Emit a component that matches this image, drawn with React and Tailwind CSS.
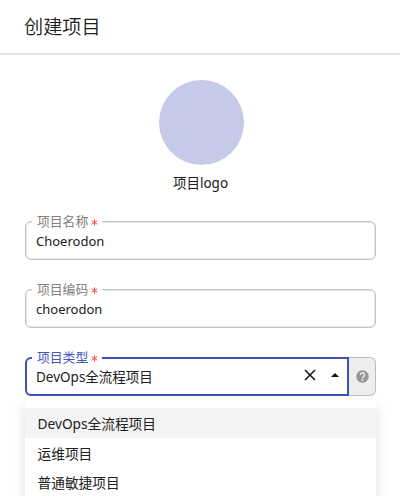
function Label({ text, active = false }) {
  return (
    <span
      className={`absolute flex h-5 w-[70px] items-center whitespace-nowrap bg-white pl-[5px] text-[12.8px] leading-5 ${
        active ? '-top-[12px] left-[5px] text-[#4456b8]' : '-top-[11px] left-[6px] text-[#808080]'
      }`}
    >
      {text}
      <svg className="ml-[3px] mt-[3px] h-[7px] w-[7px]" viewBox="0 0 8 8" fill="none" stroke="#ee4a4a" strokeWidth="1.1">
        <path d="M4 .4v7.2M.8 2.1l6.4 3.8M7.2 2.1L.8 5.9" />
      </svg>
    </span>
  );
}

function TextField({ label, value }) {
  return (
    <div className="relative h-[39px] rounded-[6px] border border-[#c4c4c4] shadow-[inset_0_0_0_0.5px_#d0d0d0]">
      <Label text={label} />
      <div className="pl-[10px] pt-[9px] text-[13px] leading-5">{value}</div>
    </div>
  );
}

const options = ['DevOps全流程项目', '运维项目', '普通敏捷项目'];

export default function App() {
  return (
    <div className="h-[496px] w-[400px] overflow-hidden bg-white font-['Noto_Sans','Noto_Sans_CJK_SC',sans-serif] text-[#202020]">
      <header className="h-[55px] border-b-2 border-[#e2e2e2] pl-6 pt-[13px] text-[19.2px] font-[350] leading-7">
        创建项目
      </header>

      <main className="pl-[25px] pr-6 pt-[25px]">
        <div className="flex flex-col items-center">
          <div className="ml-px h-[85px] w-[85px] rounded-full bg-[#c5cae9]" />
          <div className="mt-2 text-[13.5px] leading-5">项目logo</div>
        </div>

        <form className="mt-[28px] flex flex-col gap-[29px]">
          <TextField label="项目名称" value="Choerodon" />
          <TextField label="项目编码" value="choerodon" />

          <div className="flex h-[39px]">
            <div className="relative flex w-[324px] items-start rounded-l-[6px] border-2 border-[#3f51b5]">
              <Label text="项目类型" active />
              <span className="flex-1 pl-[9px] pt-[8px] text-[13.5px] leading-5">DevOps全流程项目</span>
              <svg className="mr-[15px] mt-[10px] h-3 w-3" viewBox="0 0 12 12" fill="none" stroke="#111" strokeWidth="1.5">
                <path d="M1 1l10 10M11 1L1 11" />
              </svg>
              <svg className="mr-[8px] mt-[14px] h-1 w-2" viewBox="0 0 8 4" fill="#111">
                <path d="M0 4L4 0L8 4z" />
              </svg>
            </div>
            <div className="flex w-[27px] items-center justify-center rounded-r-[6px] border-[1.5px] border-l-0 border-[#bdbdbd] bg-[#eeeeee]">
              <svg className="h-[15px] w-[15px]" viewBox="0 0 24 24" fill="#979797">
                <circle cx="12" cy="12" r="10" />
                <path d="M8.8 9.3a3.2 3.2 0 1 1 5.4 2.3c-1.2 1.1-2.2 1.7-2.2 3.3" fill="none" stroke="#eee" strokeWidth="2.4" />
                <path d="M10.7 16.4h2.6V19h-2.6z" fill="#eee" />
              </svg>
            </div>
          </div>
        </form>

        <ul className="mt-1 h-[110px] bg-white pt-2 text-[13.7px] shadow-[0_5px_12px_rgba(0,0,0,0.13)]">
          {options.map((option, i) => (
            <li key={option} className={`h-[29.5px] pl-[12.5px] pt-px leading-[30px] ${i === 0 ? 'bg-[#f4f4f4]' : ''}`}>
              {option}
            </li>
          ))}
        </ul>
      </main>
    </div>
  );
}
